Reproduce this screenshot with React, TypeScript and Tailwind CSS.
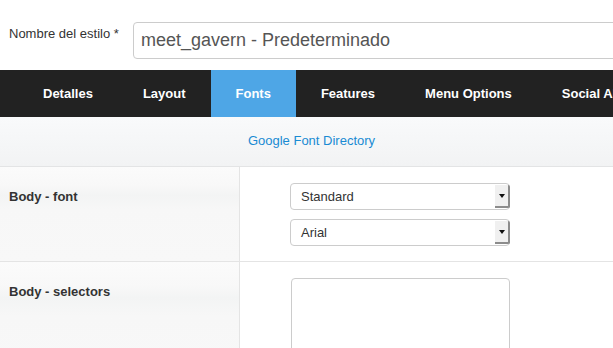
import React from "react";

function Select({ value }: { value: string }) {
  return (
    <div className="flex h-[27px] w-[220px] items-stretch rounded-[4px] border border-[#cccccc] bg-white">
      <div className="flex flex-1 items-center pl-[10px] text-[13px] text-[#333]">{value}</div>
      <div className="my-[1px] -mr-px flex w-[15px] items-center justify-center rounded-r-[2px] border-b-2 border-r-2 border-[#8c8c8c] bg-[#f0f0f0]">
        <svg width="6" height="4" viewBox="0 0 6 4">
          <path d="M0 0 L6 0 L3 4 Z" fill="#111" />
        </svg>
      </div>
    </div>
  );
}

export default function App() {
  const tabs = ["Detalles", "Layout", "Fonts", "Features", "Menu Options", "Social API"];
  return (
    <div
      className="h-[348px] w-[613px] overflow-hidden bg-white"
      style={{ fontFamily: '"Liberation Sans", Arial, sans-serif' }}
    >
      <div className="flex h-[70px] w-[700px] items-start pl-[9px]">
        <div className="mt-[26px] w-[124px] text-[13px] leading-[16px] text-[#333]">Nombre del estilo *</div>
        <div className="mt-[22px] flex h-[37px] w-[540px] items-center rounded-[4px] border border-[#cccccc] pl-[7px] text-[18px] text-[#555]">
          meet_gavern - Predeterminado
        </div>
      </div>

      <div className="flex h-[47px] w-[800px] bg-[#222222] pl-[18px]">
        {tabs.map((t) => (
          <div
            key={t}
            className={
              "flex h-full items-center px-[25px] pt-[1px] text-[13px] font-bold text-white " +
              (t === "Fonts" ? "bg-[#4ea6e6]" : "")
            }
          >
            {t}
          </div>
        ))}
      </div>

      <div className="flex h-[50px] items-center justify-center border-b border-[#e3e4e5] bg-gradient-to-b from-[#f9fafb] to-[#f2f3f4] pb-[1px] pl-[10px] text-[13px] text-[#1a8bd3]">
        Google Font Directory
      </div>

      <div className="flex h-[95px] border-b border-[#e4e4e4]">
        <div className="w-[240px] border-r border-[#e4e4e4] bg-[linear-gradient(to_bottom,#fbfbfb_0%,#f8f8f8_20%,#f3f4f4_30%,#f7f7f7_45%,#f8f8f8_100%)] pl-[9px] pt-[22px] text-[13px] font-bold leading-[16px] text-[#333]">
          Body - font
        </div>
        <div className="flex flex-1 flex-col gap-[9px] bg-white pl-[50px] pt-[16px]">
          <Select value="Standard" />
          <Select value="Arial" />
        </div>
      </div>

      <div className="flex h-[120px]">
        <div className="w-[240px] border-r border-[#e4e4e4] bg-[linear-gradient(to_bottom,#fbfbfb_0%,#f8f8f8_20%,#f3f4f4_30%,#f7f7f7_45%,#f8f8f8_100%)] pl-[9px] pt-[22px] text-[13px] font-bold leading-[16px] text-[#333]">
          Body - selectors
        </div>
        <div className="flex-1 bg-white pl-[51px] pt-[16px]">
          <div className="h-[100px] w-[219px] rounded-[4px] border border-[#cccccc] bg-white" />
        </div>
      </div>
    </div>
  );
}
